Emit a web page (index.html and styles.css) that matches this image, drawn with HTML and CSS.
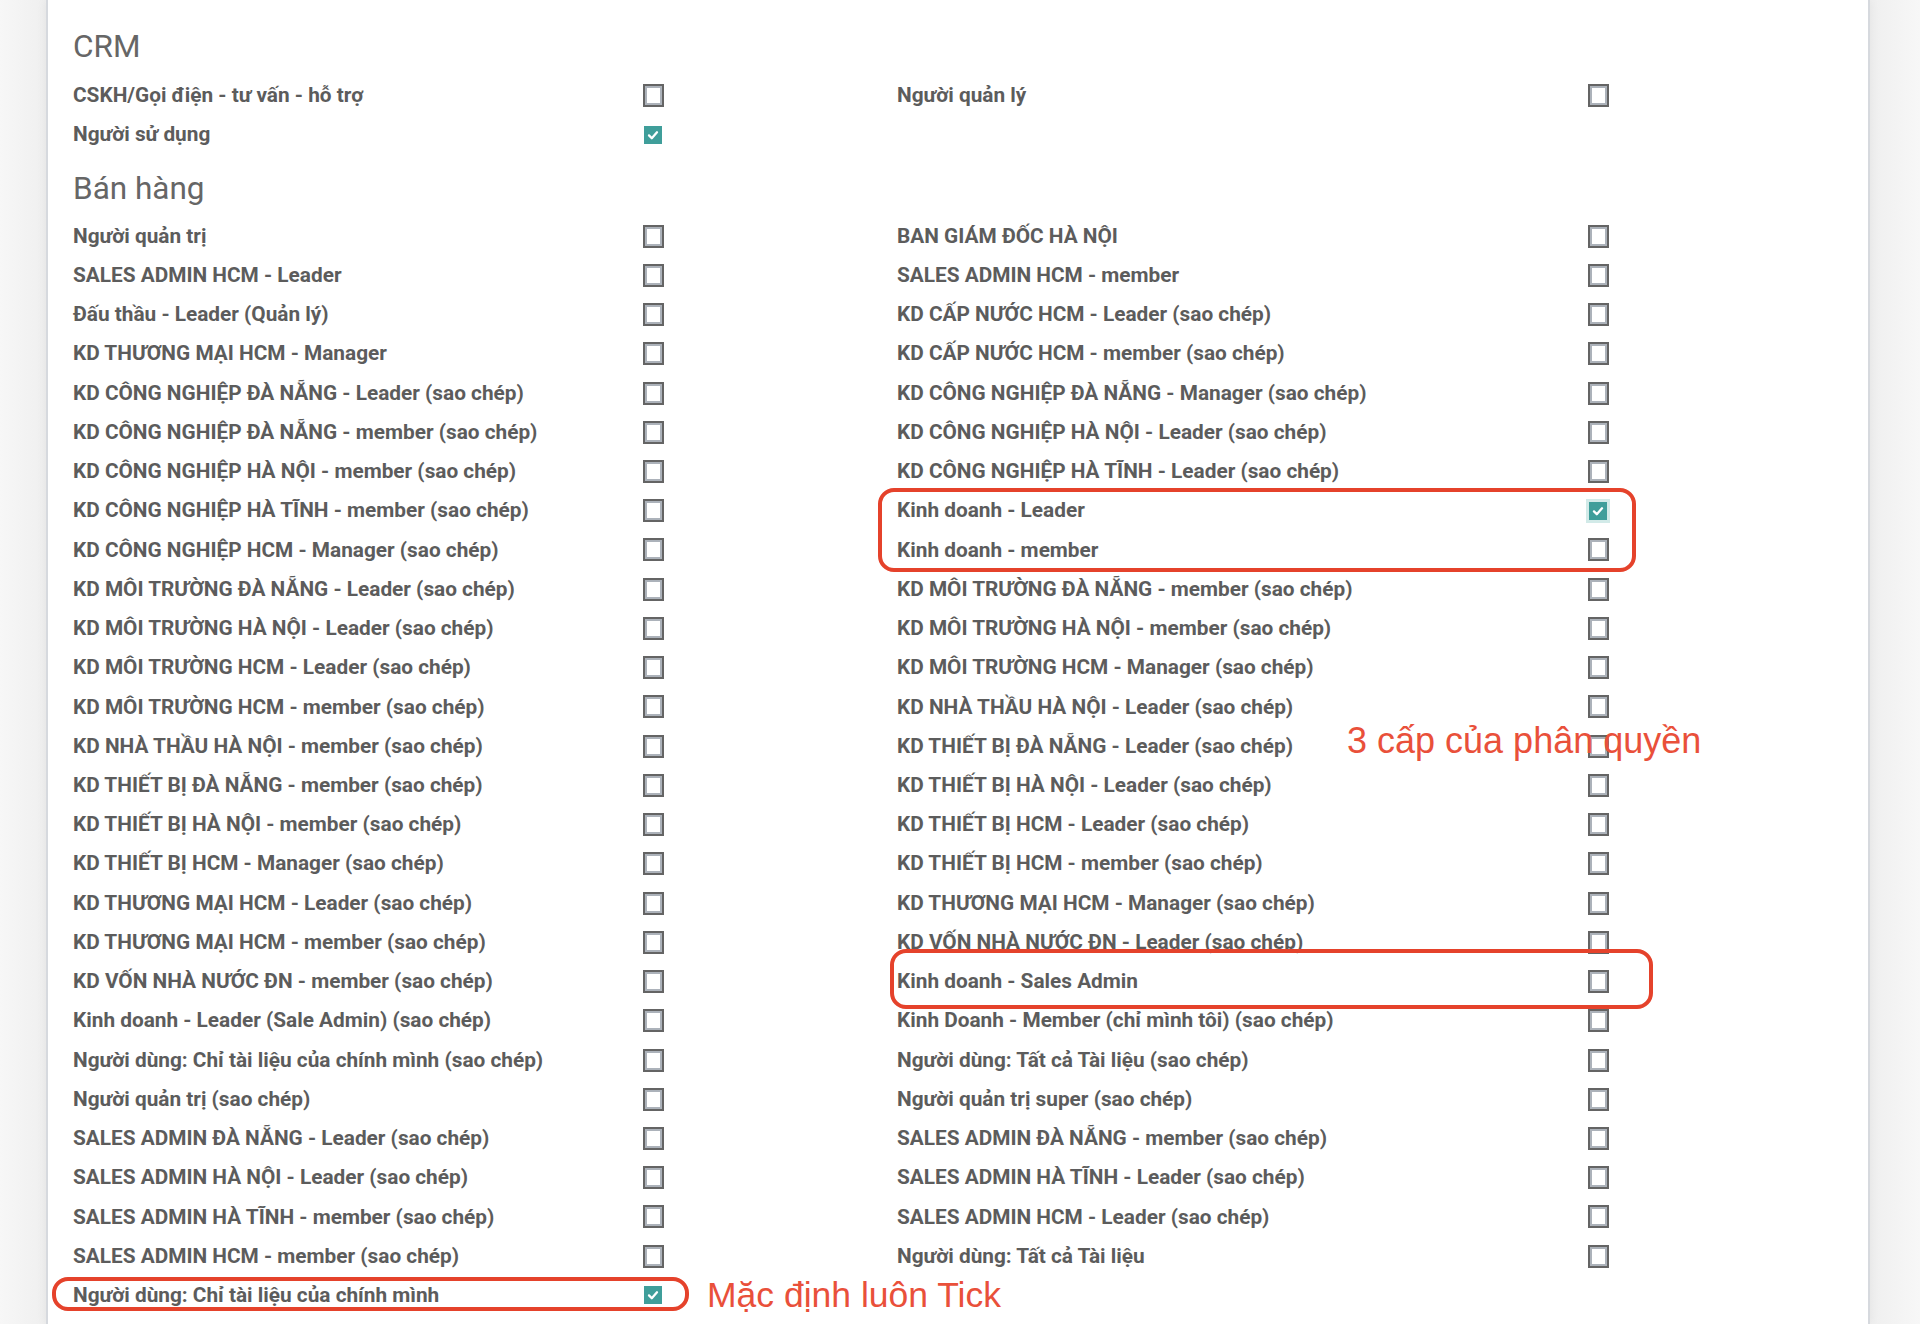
FILE: index.html
```html
<!DOCTYPE html>
<html lang="vi">
<head>
<meta charset="utf-8">
<title>Phân quyền</title>
<link rel="stylesheet" href="styles.css">
</head>
<body>
<div class="page">
  <div class="sheet">
    <section class="section">
      <h2 class="section-title">CRM</h2>
      <div class="cols">
        <div class="group group-left">
          <div class="row"><span class="lbl">CSKH/Gọi điện - tư vấn - hỗ trợ</span><span class="cb"></span></div>
          <div class="row"><span class="lbl">Người sử dụng</span><span class="cb checked"></span></div>
        </div>
        <div class="group group-right">
          <div class="row"><span class="lbl">Người quản lý</span><span class="cb"></span></div>
        </div>
      </div>
    </section>

    <section class="section">
      <h2 class="section-title">Bán hàng</h2>
      <div class="cols">
        <div class="group group-left">
          <div class="row"><span class="lbl">Người quản trị</span><span class="cb"></span></div>
          <div class="row"><span class="lbl">SALES ADMIN HCM - Leader</span><span class="cb"></span></div>
          <div class="row"><span class="lbl">Đấu thầu - Leader (Quản lý)</span><span class="cb"></span></div>
          <div class="row"><span class="lbl">KD THƯƠNG MẠI HCM - Manager</span><span class="cb"></span></div>
          <div class="row"><span class="lbl">KD CÔNG NGHIỆP ĐÀ NẴNG - Leader (sao chép)</span><span class="cb"></span></div>
          <div class="row"><span class="lbl">KD CÔNG NGHIỆP ĐÀ NẴNG - member (sao chép)</span><span class="cb"></span></div>
          <div class="row"><span class="lbl">KD CÔNG NGHIỆP HÀ NỘI - member (sao chép)</span><span class="cb"></span></div>
          <div class="row"><span class="lbl">KD CÔNG NGHIỆP HÀ TĨNH - member (sao chép)</span><span class="cb"></span></div>
          <div class="row"><span class="lbl">KD CÔNG NGHIỆP HCM - Manager (sao chép)</span><span class="cb"></span></div>
          <div class="row"><span class="lbl">KD MÔI TRƯỜNG ĐÀ NẴNG - Leader (sao chép)</span><span class="cb"></span></div>
          <div class="row"><span class="lbl">KD MÔI TRƯỜNG HÀ NỘI - Leader (sao chép)</span><span class="cb"></span></div>
          <div class="row"><span class="lbl">KD MÔI TRƯỜNG HCM - Leader (sao chép)</span><span class="cb"></span></div>
          <div class="row"><span class="lbl">KD MÔI TRƯỜNG HCM - member (sao chép)</span><span class="cb"></span></div>
          <div class="row"><span class="lbl">KD NHÀ THẦU HÀ NỘI - member (sao chép)</span><span class="cb"></span></div>
          <div class="row"><span class="lbl">KD THIẾT BỊ ĐÀ NẴNG - member (sao chép)</span><span class="cb"></span></div>
          <div class="row"><span class="lbl">KD THIẾT BỊ HÀ NỘI - member (sao chép)</span><span class="cb"></span></div>
          <div class="row"><span class="lbl">KD THIẾT BỊ HCM - Manager (sao chép)</span><span class="cb"></span></div>
          <div class="row"><span class="lbl">KD THƯƠNG MẠI HCM - Leader (sao chép)</span><span class="cb"></span></div>
          <div class="row"><span class="lbl">KD THƯƠNG MẠI HCM - member (sao chép)</span><span class="cb"></span></div>
          <div class="row"><span class="lbl">KD VỐN NHÀ NƯỚC ĐN - member (sao chép)</span><span class="cb"></span></div>
          <div class="row"><span class="lbl">Kinh doanh - Leader (Sale Admin) (sao chép)</span><span class="cb"></span></div>
          <div class="row"><span class="lbl">Người dùng: Chỉ tài liệu của chính mình (sao chép)</span><span class="cb"></span></div>
          <div class="row"><span class="lbl">Người quản trị (sao chép)</span><span class="cb"></span></div>
          <div class="row"><span class="lbl">SALES ADMIN ĐÀ NẴNG - Leader (sao chép)</span><span class="cb"></span></div>
          <div class="row"><span class="lbl">SALES ADMIN HÀ NỘI - Leader (sao chép)</span><span class="cb"></span></div>
          <div class="row"><span class="lbl">SALES ADMIN HÀ TĨNH - member (sao chép)</span><span class="cb"></span></div>
          <div class="row"><span class="lbl">SALES ADMIN HCM - member (sao chép)</span><span class="cb"></span></div>
          <div class="row"><span class="lbl">Người dùng: Chỉ tài liệu của chính mình</span><span class="cb checked"></span></div>
        </div>
        <div class="group group-right">
          <div class="row"><span class="lbl">BAN GIÁM ĐỐC HÀ NỘI</span><span class="cb"></span></div>
          <div class="row"><span class="lbl">SALES ADMIN HCM - member</span><span class="cb"></span></div>
          <div class="row"><span class="lbl">KD CẤP NƯỚC HCM - Leader (sao chép)</span><span class="cb"></span></div>
          <div class="row"><span class="lbl">KD CẤP NƯỚC HCM - member (sao chép)</span><span class="cb"></span></div>
          <div class="row"><span class="lbl">KD CÔNG NGHIỆP ĐÀ NẴNG - Manager (sao chép)</span><span class="cb"></span></div>
          <div class="row"><span class="lbl">KD CÔNG NGHIỆP HÀ NỘI - Leader (sao chép)</span><span class="cb"></span></div>
          <div class="row"><span class="lbl">KD CÔNG NGHIỆP HÀ TĨNH - Leader (sao chép)</span><span class="cb"></span></div>
          <div class="row"><span class="lbl">Kinh doanh - Leader</span><span class="cb checked focused"></span></div>
          <div class="row"><span class="lbl">Kinh doanh - member</span><span class="cb"></span></div>
          <div class="row"><span class="lbl">KD MÔI TRƯỜNG ĐÀ NẴNG - member (sao chép)</span><span class="cb"></span></div>
          <div class="row"><span class="lbl">KD MÔI TRƯỜNG HÀ NỘI - member (sao chép)</span><span class="cb"></span></div>
          <div class="row"><span class="lbl">KD MÔI TRƯỜNG HCM - Manager (sao chép)</span><span class="cb"></span></div>
          <div class="row"><span class="lbl">KD NHÀ THẦU HÀ NỘI - Leader (sao chép)</span><span class="cb"></span></div>
          <div class="row"><span class="lbl">KD THIẾT BỊ ĐÀ NẴNG - Leader (sao chép)</span><span class="cb"></span></div>
          <div class="row"><span class="lbl">KD THIẾT BỊ HÀ NỘI - Leader (sao chép)</span><span class="cb"></span></div>
          <div class="row"><span class="lbl">KD THIẾT BỊ HCM - Leader (sao chép)</span><span class="cb"></span></div>
          <div class="row"><span class="lbl">KD THIẾT BỊ HCM - member (sao chép)</span><span class="cb"></span></div>
          <div class="row"><span class="lbl">KD THƯƠNG MẠI HCM - Manager (sao chép)</span><span class="cb"></span></div>
          <div class="row"><span class="lbl">KD VỐN NHÀ NƯỚC ĐN - Leader (sao chép)</span><span class="cb"></span></div>
          <div class="row"><span class="lbl">Kinh doanh - Sales Admin</span><span class="cb"></span></div>
          <div class="row"><span class="lbl">Kinh Doanh - Member (chỉ mình tôi) (sao chép)</span><span class="cb"></span></div>
          <div class="row"><span class="lbl">Người dùng: Tất cả Tài liệu (sao chép)</span><span class="cb"></span></div>
          <div class="row"><span class="lbl">Người quản trị super (sao chép)</span><span class="cb"></span></div>
          <div class="row"><span class="lbl">SALES ADMIN ĐÀ NẴNG - member (sao chép)</span><span class="cb"></span></div>
          <div class="row"><span class="lbl">SALES ADMIN HÀ TĨNH - Leader (sao chép)</span><span class="cb"></span></div>
          <div class="row"><span class="lbl">SALES ADMIN HCM - Leader (sao chép)</span><span class="cb"></span></div>
          <div class="row"><span class="lbl">Người dùng: Tất cả Tài liệu</span><span class="cb"></span></div>
        </div>
      </div>
    </section>
  </div>

  <div class="mark mark-levels"></div>
  <div class="mark mark-sales-admin"></div>
  <div class="mark mark-default"></div>
  <div class="note note-levels">3 cấp của phân quyền</div>
  <div class="note note-default">Mặc định luôn Tick</div>
</div>
</body>
</html>
```

FILE: styles.css
```css
html, body {
  margin: 0;
  padding: 0;
  height: 1324px;
  overflow: hidden;
}

body {
  background: linear-gradient(90deg, #f7f7f7 0px, #efefef 46px, #efefef 1870px, #f7f7f7 1920px);
  font-family: Roboto, "Noto Sans", "Liberation Sans", sans-serif;
}

.page {
  position: relative;
  width: 1920px;
  height: 1324px;
}

.sheet {
  margin-left: 46px;
  width: 1824px;
  min-height: 1324px;
  box-sizing: border-box;
  background: #fff;
  border-left: 2px solid #d6d9de;
  border-right: 2px solid #d6d9de;
  box-shadow: 0 0 10px rgba(0, 0, 0, 0.06);
  padding: 18px 0 0 25px;
}

.section + .section {
  margin-top: 6px;
}

.section-title {
  margin: 0;
  height: 58px;
  line-height: 57px;
  font-size: 31.5px;
  font-weight: 400;
  color: #666;
}

.section + .section .section-title {
  height: 56px;
  line-height: 58px;
}

.cols {
  display: flex;
}

.group-left {
  width: 824px;
}

.group-right {
  width: 760px;
}

.row {
  display: grid;
  align-items: center;
  height: 39.24px;
}

.group-left .row {
  grid-template-columns: 569px 22px;
}

.group-right .row {
  grid-template-columns: 690px 22px;
}

.lbl {
  font-size: 20.8px;
  font-weight: 700;
  color: #5c5c5c;
  white-space: nowrap;
  line-height: 1;
}

.cb {
  justify-self: center;
  box-sizing: border-box;
  width: 21px;
  height: 23px;
  border: 2.5px solid #646464;
  box-shadow: inset 0 0 0 2px #acb2ba;
  background: #fff;
}

.cb.checked {
  width: 18px;
  height: 18px;
  border: 0;
  box-shadow: none;
  background-color: #3f9e9a;
  background-image: url("data:image/svg+xml;utf8,<svg xmlns='http://www.w3.org/2000/svg' viewBox='0 0 18 18'><path d='M5 9.4 L7.8 12.2 L13 6.3' fill='none' stroke='white' stroke-width='2.3' stroke-linecap='round' stroke-linejoin='round'/></svg>");
  background-repeat: no-repeat;
  background-size: 18px 18px;
}

.cb.checked.focused {
  box-shadow: 0 0 0 3px #d2eae8;
}

.mark {
  position: absolute;
  box-sizing: border-box;
  border: 4px solid #e5422b;
  border-radius: 16px;
}

.mark-levels {
  left: 878px;
  top: 488px;
  width: 758px;
  height: 84px;
}

.mark-sales-admin {
  left: 890px;
  top: 949px;
  width: 763px;
  height: 60px;
}

.mark-default {
  left: 52px;
  top: 1277px;
  width: 637px;
  height: 34px;
  border-radius: 16px;
}

.note {
  position: absolute;
  font-family: "Liberation Sans", Arial, sans-serif;
  color: #e9503a;
  white-space: nowrap;
}

.note-levels {
  left: 1347px;
  top: 723px;
  font-size: 36px;
  line-height: 36px;
}

.note-default {
  left: 707px;
  top: 1278px;
  font-size: 35.5px;
  line-height: 35.5px;
}
```
